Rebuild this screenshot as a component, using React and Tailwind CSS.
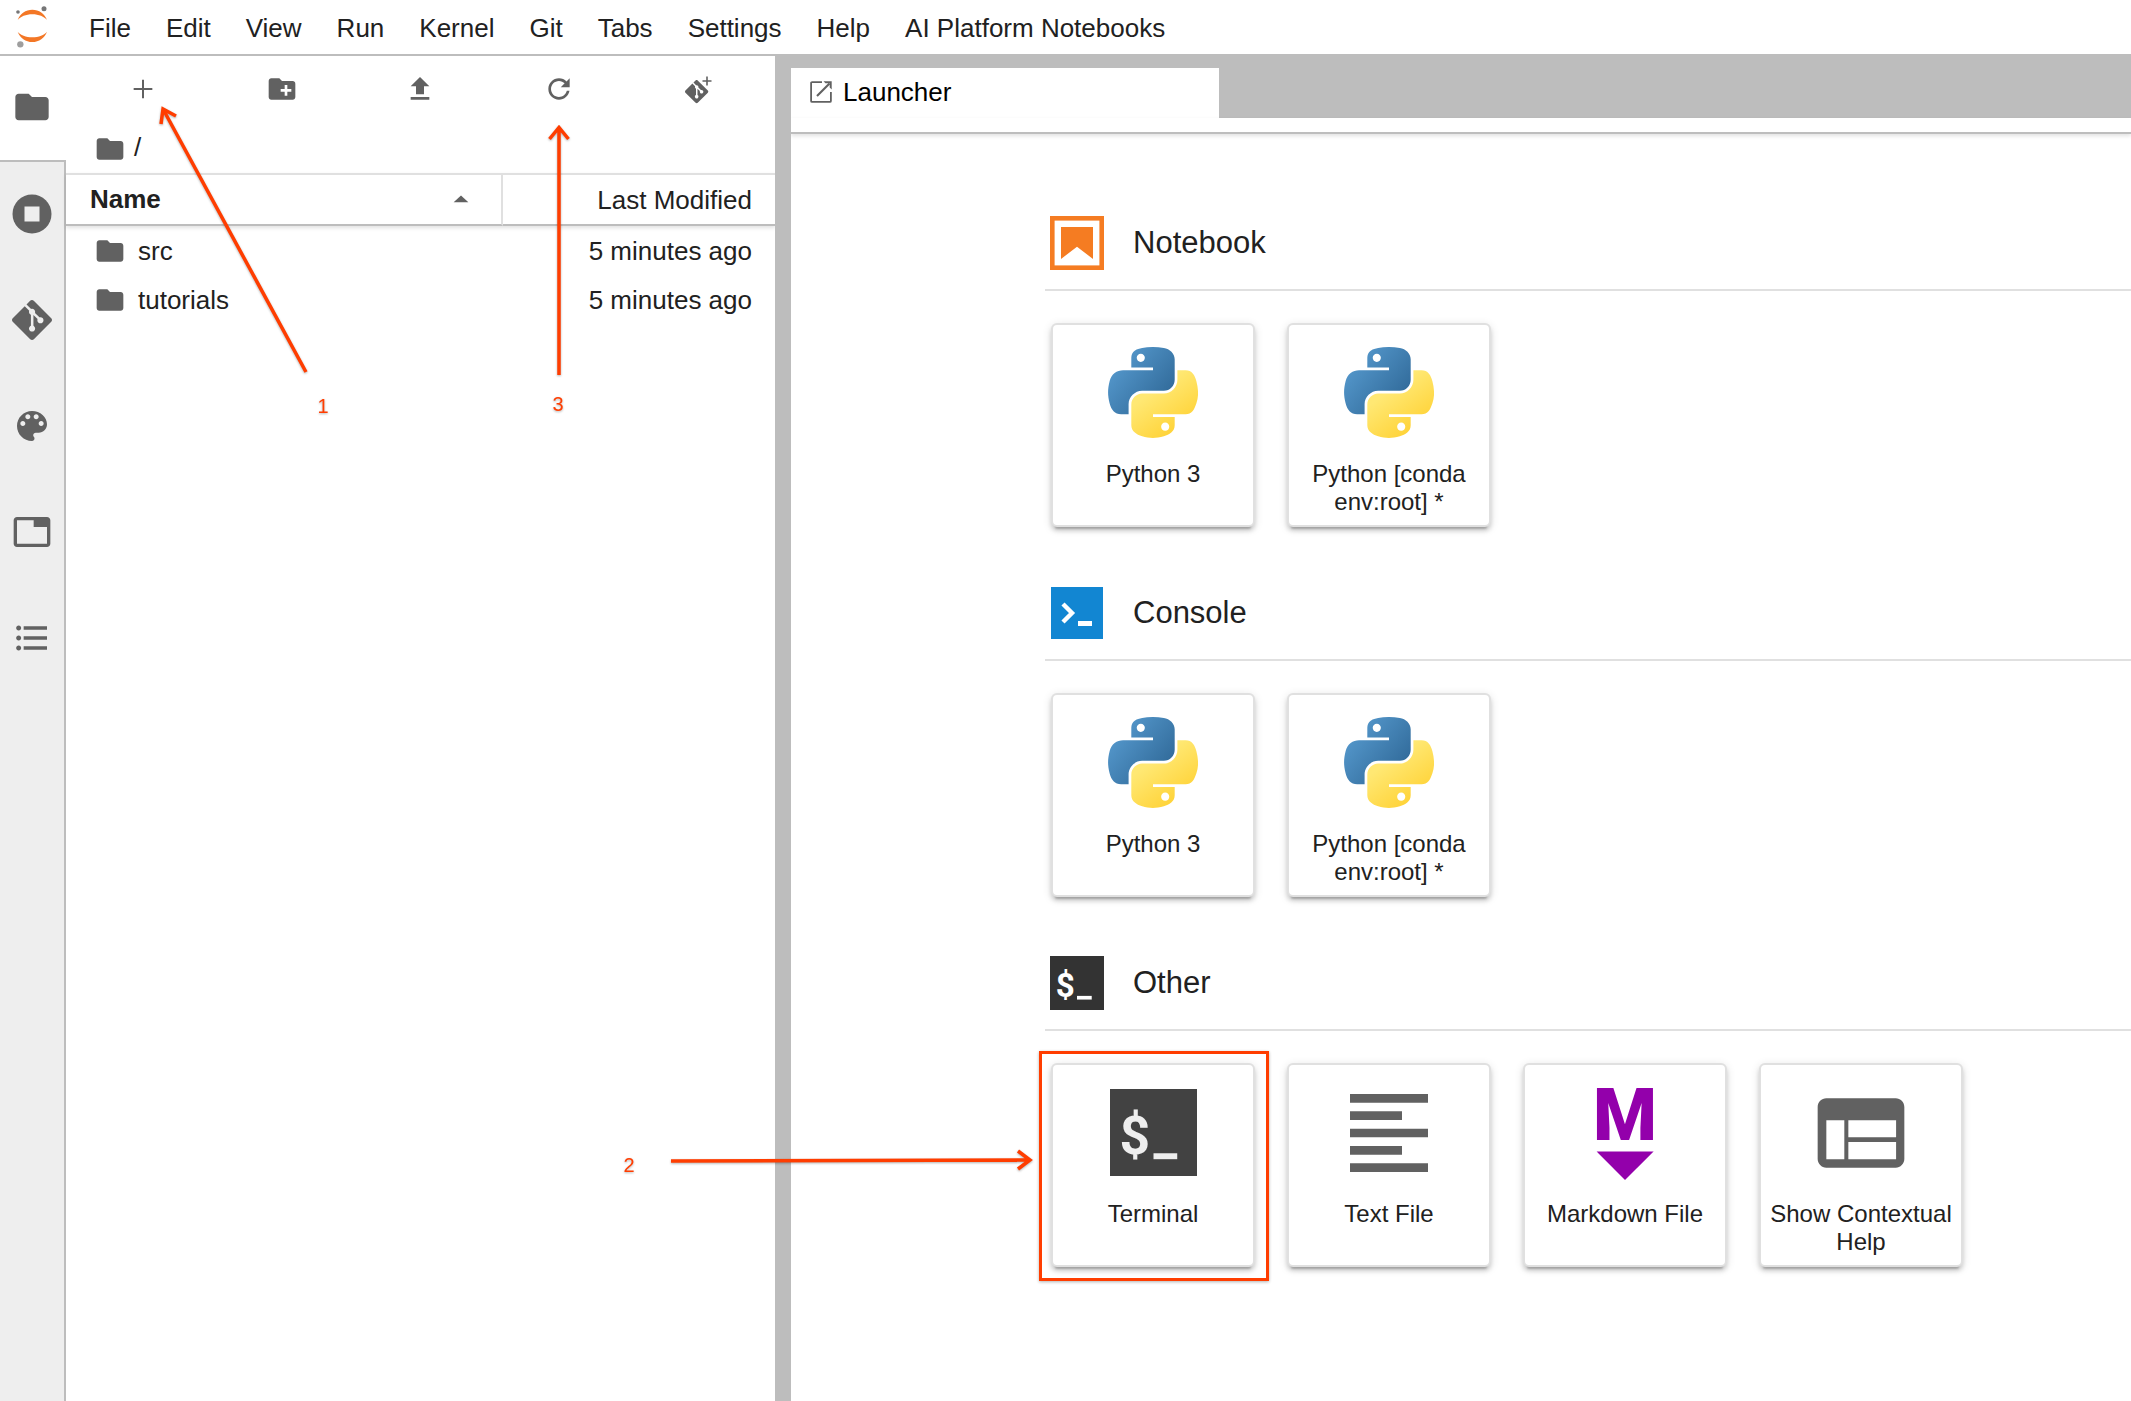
import { useId } from "react";

const FOLDER = "M10 4H4c-1.1 0-1.99.9-1.99 2L2 18c0 1.1.9 2 2 2h16c1.1 0 2-.9 2-2V8c0-1.1-.9-2-2-2h-8l-2-2z";
const NEW_FOLDER =
  "M20 6h-8l-2-2H4c-1.11 0-1.99.89-1.99 2L2 18c0 1.11.89 2 2 2h16c1.11 0 2-.89 2-2V8c0-1.11-.89-2-2-2zm-1 8h-3v3h-2v-3h-3v-2h3V9h2v3h3v2z";
const ADD = "M19 12.75h-6.25V19h-1.5v-6.25H5v-1.5h6.25V5h1.5v6.25H19v1.5z";
const UPLOAD = "M9 16h6v-6h4l-7-7-7 7h4zm-4 2h14v2H5z";
const REFRESH =
  "M9 13.5c-2.49 0-4.5-2.01-4.5-4.5S6.51 4.5 9 4.5c1.24 0 2.36.52 3.17 1.33L10 8h5V3l-1.76 1.76C12.15 3.68 10.66 3 9 3 5.69 3 3.01 5.69 3.01 9S5.69 15 9 15c2.97 0 5.43-2.16 5.9-5h-1.52c-.46 2-2.24 3.5-4.38 3.5z";
const GIT =
  "M23.546 10.93L13.067.452c-.604-.603-1.582-.603-2.188 0L8.708 2.627l2.76 2.76c.645-.215 1.379-.07 1.889.441.516.515.658 1.258.438 1.9l2.658 2.66c.645-.223 1.387-.078 1.9.435.721.72.721 1.884 0 2.604-.719.719-1.881.719-2.6 0-.539-.541-.674-1.337-.404-1.996L12.86 8.955v6.525c.176.086.342.203.488.348.713.721.713 1.883 0 2.6-.719.721-1.889.721-2.609 0-.719-.719-.719-1.879 0-2.598.182-.18.387-.316.605-.406V8.835c-.217-.091-.424-.222-.6-.401-.545-.545-.676-1.342-.396-2.009L7.636 3.7.45 10.881c-.6.605-.6 1.584 0 2.189l10.48 10.477c.604.604 1.582.604 2.186 0l10.43-10.43c.605-.603.605-1.582 0-2.187";
const PALETTE =
  "M12 3c-4.97 0-9 4.03-9 9s4.03 9 9 9c.83 0 1.5-.67 1.5-1.5 0-.39-.15-.74-.39-1.01-.23-.26-.38-.61-.38-.99 0-.83.67-1.5 1.5-1.5H16c2.76 0 5-2.24 5-5 0-4.42-4.03-8-9-8zm-5.5 9c-.83 0-1.5-.67-1.5-1.5S5.67 9 6.5 9 8 9.67 8 10.5 7.33 12 6.5 12zm3-4C8.67 8 8 7.33 8 6.5S8.67 5 9.5 5s1.5.67 1.5 1.5S10.33 8 9.5 8zm5 0c-.83 0-1.5-.67-1.5-1.5S13.67 5 14.5 5s1.5.67 1.5 1.5S15.33 8 14.5 8zm3 4c-.83 0-1.5-.67-1.5-1.5S16.67 9 17.5 9s1.5.67 1.5 1.5-.67 1.5-1.5 1.5z";
const TABS =
  "M21 3H3c-1.1 0-2 .9-2 2v14c0 1.1.9 2 2 2h18c1.1 0 2-.9 2-2V5c0-1.1-.9-2-2-2zm0 16H3V5h10v4h8v10z";
const LIST =
  "M4 10.5c-.83 0-1.5.67-1.5 1.5s.67 1.5 1.5 1.5 1.5-.67 1.5-1.5-.67-1.5-1.5-1.5zm0-6c-.83 0-1.5.67-1.5 1.5S3.170 7.5 4 7.5 5.500 6.830 5.500 6 4.830 4.500 4 4.500zm0 12c-.83 0-1.500.680-1.500 1.500s.680 1.500 1.500 1.500 1.500-.680 1.500-1.500-.670-1.500-1.500-1.500zM7 19h14v-2H7v2zm0-6h14v-2H7v2zm0-8v2h14V5H7z";
const TEXT_LINES =
  "M15 15H3v2h12v-2zm0-8H3v2h12V7zM3 13h18v-2H3v2zm0 8h18v-2H3v2zM3 3v2h18V3H3z";
const HELP_PANES =
  "M20 4H4c-1.100 0-2 .9-2 2v12c0 1.100.9 2 2 2h16c1.100 0 2-.9 2-2V6c0-1.100-.9-2-2-2zM8.150 18.080H4v-9h4.150zM20.100 18.080H9.080v-4H20.100zM20.100 13H9.080V9.080H20.100z";

function Glyph({ d, box = 24, className }) {
  return (
    <svg viewBox={`0 0 ${box} ${box}`} className={className} fill="currentColor" fillRule="evenodd" aria-hidden="true">
      <path d={d} />
    </svg>
  );
}

function StopIcon() {
  return (
    <svg viewBox="0 0 40 40" className="size-10" aria-hidden="true">
      <circle cx="20" cy="20" r="19.5" fill="currentColor" />
      <rect x="12.500" y="12.500" width="15" height="15" fill="#eeeeee" />
    </svg>
  );
}

function GitAddIcon() {
  return (
    <svg viewBox="0 0 32 32" className="size-8" fill="currentColor" aria-hidden="true">
      <path d={GIT} transform="translate(3 7) scale(0.97)" />
      <path d="M24.200 3.500h1.600v3.700h3.700v1.600h-3.700v3.700h-1.600V8.800h-3.700V7.200h3.700z" />
    </svg>
  );
}

function JupyterLogo() {
  return (
    <svg viewBox="0 0 96 126" className="h-[42px] w-8" aria-label="Jupyter" role="img">
      <g fill="#f37726">
        <path d="M5 42C12 23 29 11 49 11S86 23 93 42C85 32 68 25 49 25S13 32 5 42z" />
        <path d="M5 77c7 19 24 31 44 31s37-12 44-31c-8 10-25 17-44 17S13 87 5 77z" />
      </g>
      <circle cx="84" cy="8" r="7.5" fill="#767677" />
      <circle cx="6" cy="18" r="5.5" fill="#767677" />
      <circle cx="13" cy="115" r="9.5" fill="#9e9e9e" />
    </svg>
  );
}

function PythonLogo() {
  const id = useId();
  return (
    <svg viewBox="0 0 111 112.400" className="h-[91px] w-[90px]" aria-hidden="true">
      <defs>
        <linearGradient id={`${id}b`} x1="0" y1="8" x2="74" y2="68" gradientUnits="userSpaceOnUse">
          <stop offset="0" stopColor="#5a9fd4" />
          <stop offset="1" stopColor="#306998" />
        </linearGradient>
        <linearGradient id={`${id}y`} x1="88" y1="98" x2="56" y2="54" gradientUnits="userSpaceOnUse">
          <stop offset="0" stopColor="#ffd43b" />
          <stop offset="1" stopColor="#ffe873" />
        </linearGradient>
      </defs>
      <path
        fill={`url(#${id}b)`}
        d="M54.919 0C50.335.022 45.958.413 42.106 1.095 30.760 3.099 28.700 7.295 28.700 15.032v10.219h26.813v3.406H18.638c-7.793 0-14.616 4.684-16.750 13.594-2.462 10.213-2.571 16.586 0 27.250 1.906 7.938 6.457 13.594 14.250 13.594h9.218v-12.250c0-8.850 7.657-16.657 16.750-16.657h26.782c7.455 0 13.406-6.138 13.406-13.625V15.032c0-7.266-6.130-12.725-13.406-13.937C64.282.328 59.502-.020 54.919 0zm-14.500 8.220c2.769 0 5.031 2.298 5.031 5.125 0 2.816-2.262 5.093-5.031 5.093-2.780 0-5.031-2.277-5.031-5.093 0-2.827 2.251-5.125 5.031-5.125z"
      />
      <path
        fill={`url(#${id}y)`}
        d="M85.638 28.657v11.906c0 9.231-7.826 17-16.750 17H42.106c-7.336 0-13.406 6.279-13.406 13.625V96.720c0 7.266 6.319 11.540 13.406 13.625 8.488 2.495 16.626 2.946 26.782 0 6.750-1.955 13.406-5.888 13.406-13.625V86.501H55.513v-3.406H95.700c7.793 0 10.696-5.436 13.406-13.594 2.800-8.399 2.680-16.476 0-27.250-1.925-7.758-5.604-13.594-13.406-13.594zM70.575 93.313c2.780 0 5.031 2.278 5.031 5.094 0 2.827-2.251 5.125-5.031 5.125-2.769 0-5.031-2.298-5.031-5.125 0-2.816 2.262-5.094 5.031-5.094z"
      />
    </svg>
  );
}

function NotebookIcon() {
  return (
    <svg viewBox="0 0 54 54" className="size-[54px]" aria-hidden="true">
      <rect x="2.300" y="2.300" width="49.400" height="49.400" fill="none" stroke="#f57c22" strokeWidth="4.600" />
      <path d="M11 11h32v32L27 30.700 11 43z" fill="#f57c22" />
    </svg>
  );
}

function ConsoleIcon() {
  return (
    <svg viewBox="0 0 54 54" className="size-[54px]" aria-hidden="true">
      <rect x="1" y="1" width="52" height="52" fill="#1286d2" />
      <path d="M13 18l9 9-9 9" fill="none" stroke="#ffffff" strokeWidth="4.400" />
      <rect x="28" y="35" width="14" height="5" fill="#ffffff" />
    </svg>
  );
}

function PromptIcon({ className, fill, ink }) {
  return (
    <svg viewBox="0 0 88 88" className={className} aria-hidden="true">
      <rect width="88" height="88" fill={fill} />
      <text x="25" y="66" textAnchor="middle" fontFamily="Roboto, sans-serif" fontWeight="700" fontSize="54" fill={ink}>
        $
      </text>
      <rect x="44" y="65" width="24" height="6" fill={ink} />
    </svg>
  );
}

function MarkdownIcon() {
  return (
    <svg viewBox="0 0 104 104" className="size-[104px] overflow-visible" fill="#9300ab" aria-hidden="true">
      <text x="52" y="59" textAnchor="middle" fontFamily="Roboto, sans-serif" fontWeight="900" fontSize="73">
        M
      </text>
      <path d="M23.600 70.500h57L52 99z" />
    </svg>
  );
}

function LauncherTabIcon() {
  return (
    <svg viewBox="0 0 22 22" className="size-[22px] text-[#616161]" aria-hidden="true">
      <path d="M12 1.100H2.100a1 1 0 0 0-1 1v17.800a1 1 0 0 0 1 1h17.800a1 1 0 0 0 1-1V11" fill="none" stroke="currentColor" strokeWidth="1.800" />
      <path d="M7 15L19.500 2.500" stroke="currentColor" strokeWidth="2.200" />
      <path d="M13.500 0.300H21.700V8.500l-2-2V2.300h-4.200z" fill="currentColor" />
    </svg>
  );
}

const MENUS = ["File", "Edit", "View", "Run", "Kernel", "Git", "Tabs", "Settings", "Help", "AI Platform Notebooks"];

const SIDE_TABS = [
  { label: "Running terminals and kernels", icon: <StopIcon /> },
  { label: "Git", icon: <Glyph d={GIT} className="size-10" /> },
  { label: "Commands", icon: <Glyph d={PALETTE} className="size-10" /> },
  { label: "Open tabs", icon: <Glyph d={TABS} className="size-10" /> },
  { label: "Table of contents", icon: <Glyph d={LIST} className="size-10" /> },
];

const TOOLS = [
  { label: "New launcher", icon: <Glyph d={ADD} className="size-8" /> },
  { label: "New folder", icon: <Glyph d={NEW_FOLDER} className="size-8" /> },
  { label: "Upload files", icon: <Glyph d={UPLOAD} className="size-8" /> },
  { label: "Refresh file list", icon: <Glyph d={REFRESH} box={18} className="size-8" /> },
  { label: "Git clone", icon: <GitAddIcon /> },
];

const FILES = [
  { name: "src", modified: "5 minutes ago" },
  { name: "tutorials", modified: "5 minutes ago" },
];

const KERNELS = [
  { label: "Python 3", icon: <PythonLogo /> },
  { label: "Python [conda env:root] *", icon: <PythonLogo /> },
];

const SECTIONS = [
  { title: "Notebook", icon: <NotebookIcon />, cards: KERNELS },
  { title: "Console", icon: <ConsoleIcon />, cards: KERNELS },
  {
    title: "Other",
    icon: <PromptIcon className="size-[54px]" fill="#333333" ink="#ffffff" />,
    cards: [
      { label: "Terminal", icon: <PromptIcon className="size-[87px]" fill="#424242" ink="#eeeeee" />, marked: true },
      { label: "Text File", icon: <Glyph d={TEXT_LINES} className="size-[104px] text-[#616161]" /> },
      { label: "Markdown File", icon: <MarkdownIcon /> },
      { label: "Show Contextual Help", icon: <Glyph d={HELP_PANES} className="size-[104px] text-[#616161]" /> },
    ],
  },
];

function MenuBar() {
  return (
    <header className="flex h-14 items-center border-b-2 border-[#bdbdbd] pl-4">
      <JupyterLogo />
      <nav className="ml-6 flex gap-px pt-0.5" aria-label="Main menu">
        {MENUS.map((m) => (
          <button key={m} type="button" className="px-[17px] whitespace-nowrap">
            {m}
          </button>
        ))}
      </nav>
    </header>
  );
}

function SideBar() {
  return (
    <nav className="flex w-[66px] shrink-0 flex-col bg-[#eeeeee] text-[#616161]" aria-label="Side bar">
      <button
        type="button"
        aria-label="File browser"
        className="flex h-[106px] items-center justify-center border-b-2 border-[#bdbdbd] bg-white pr-0.5 pb-0.5"
      >
        <Glyph d={FOLDER} className="size-10" />
      </button>
      <div className="flex flex-1 flex-col border-r-2 border-[#bdbdbd]">
        {SIDE_TABS.map((t) => (
          <button key={t.label} type="button" aria-label={t.label} className="flex h-[106px] items-center justify-center pb-0.5">
            {t.icon}
          </button>
        ))}
      </div>
    </nav>
  );
}

function FileBrowser() {
  return (
    <section className="w-[709px] shrink-0" aria-label="File browser">
      <div className="flex h-[66px] px-2 text-[#616161]">
        {TOOLS.map((t) => (
          <button key={t.label} type="button" aria-label={t.label} className="flex flex-1 items-center justify-center">
            {t.icon}
          </button>
        ))}
      </div>
      <div className="flex h-[51px] items-center pl-7">
        <button type="button" className="flex items-start gap-2" aria-label="Root folder">
          <Glyph d={FOLDER} className="mt-0.5 size-8 text-[#616161]" />
          <span>/</span>
        </button>
      </div>
      <table className="w-full table-fixed border-separate border-spacing-0">
        <thead className="shadow-[0_2px_4px_rgba(0,0,0,0.12)]">
          <tr className="h-[53px]">
            <th scope="col" className="w-[437px] border-t-2 border-r-2 border-b-2 border-t-[#e0e0e0] border-r-[#e0e0e0] border-b-[#bdbdbd] p-0 pb-0.5">
              <button type="button" className="flex w-full items-center justify-between pr-6 pl-6 font-bold">
                Name
                <Glyph d="M6.500 14.500L12 9.300l5.500 5.200z" className="size-8 text-[#616161]" />
              </button>
            </th>
            <th scope="col" className="border-t-2 border-b-2 border-t-[#e0e0e0] border-b-[#bdbdbd] p-0 pr-[23px] text-right font-normal">
              <button type="button">Last Modified</button>
            </th>
          </tr>
        </thead>
        <tbody>
          {FILES.map((f) => (
            <tr key={f.name} className="h-[49px]">
              <td className="p-0 pl-7">
                <div className="flex items-center gap-3">
                  <Glyph d={FOLDER} className="size-8 text-[#616161]" />
                  {f.name}
                </div>
              </td>
              <td className="p-0 pr-[23px] text-right">{f.modified}</td>
            </tr>
          ))}
        </tbody>
      </table>
    </section>
  );
}

function Card({ label, icon, marked }) {
  return (
    <div className="relative">
      <button
        type="button"
        className="flex size-[204px] flex-col items-center rounded-md border-2 border-[#e0e0e0] bg-white text-2xl leading-7 shadow-[0_6px_2px_-4px_rgba(0,0,0,0.2),0_4px_4px_rgba(0,0,0,0.14),0_2px_10px_rgba(0,0,0,0.12)]"
      >
        <span className="flex h-[135px] shrink-0 items-center justify-center">{icon}</span>
        <span className="px-2">{label}</span>
      </button>
      {marked && (
        <div className="pointer-events-none absolute -top-3 -right-3.5 -bottom-3.5 -left-3 border-3 border-[#ff3d00] shadow-[0_1px_3px_rgba(0,0,0,0.3)]" />
      )}
    </div>
  );
}

function Launcher() {
  return (
    <main className="flex min-w-0 flex-1 flex-col overflow-hidden border-l-16 border-[#bdbdbd]">
      <div className="flex h-[62px] items-end bg-[#bdbdbd]" role="tablist">
        <button
          type="button"
          role="tab"
          aria-selected="true"
          className="flex h-[50px] w-[428px] items-center gap-[11px] bg-white pb-0.5 pl-[19px] text-black"
        >
          <LauncherTabIcon />
          Launcher
        </button>
      </div>
      <div className="h-4 border-b-2 border-[#bdbdbd] shadow-[0_2px_4px_rgba(0,0,0,0.12)]" />
      <div className="flex flex-col gap-[59px] pt-[82px] pl-[254px]">
        {SECTIONS.map((s) => (
          <section key={s.title} aria-label={s.title}>
            <div className="flex h-[75px] items-start gap-[29px] border-b-2 border-[#e0e0e0] pl-[5px]">
              {s.icon}
              <h2 className="text-[31px] leading-[54px]">{s.title}</h2>
            </div>
            <div className="mt-8 flex flex-wrap gap-8 pl-1.5">
              {s.cards.map((c) => (
                <Card key={c.label} {...c} />
              ))}
            </div>
          </section>
        ))}
      </div>
    </main>
  );
}

function Annotations() {
  return (
    <svg
      className="pointer-events-none absolute top-0 left-0 drop-shadow-[0_1px_1px_rgba(0,0,0,0.3)]"
      width="1040"
      height="1200"
      aria-hidden="true"
    >
      <g fill="none" stroke="#ff3d00" strokeWidth="3.500">
        <path d="M306 372L163 109M161 124l2-15 13 7" />
        <path d="M559 375V127M549.500 139l9.500-11.500 9.500 11.500" />
        <path d="M671 1161l359-1M1018 1151l12 9-12 9" />
      </g>
      <g fill="#ff3d00" fontSize="20" textAnchor="middle">
        <text x="323" y="413">1</text>
        <text x="629" y="1172">2</text>
        <text x="558" y="411">3</text>
      </g>
    </svg>
  );
}

export default function App() {
  return (
    <div className="relative flex min-h-screen flex-col bg-white font-['Liberation_Sans',Arial,sans-serif] text-[26px] leading-8 text-[#212121]">
      <MenuBar />
      <div className="flex flex-1">
        <SideBar />
        <FileBrowser />
        <Launcher />
      </div>
      <Annotations />
    </div>
  );
}
